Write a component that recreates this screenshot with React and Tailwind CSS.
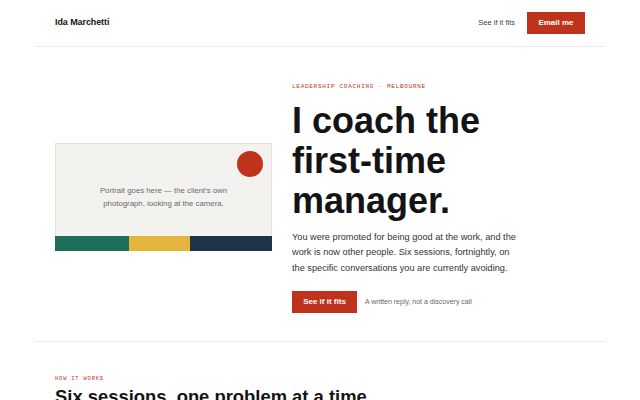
export default function App() {
  return (
    <div className="min-h-screen bg-white font-['Liberation_Sans',Arial,sans-serif] text-[#141414]">
      <div className="mx-[35px]">
        <header className="flex h-[47px] items-center justify-between border-b border-[#ebebeb] px-5">
          <div className="text-[9px] font-bold tracking-[-0.01em]">Ida Marchetti</div>
          <nav className="flex items-center gap-3">
            <a className="text-[7.5px] text-[#444]">See if it fits</a>
            <a className="flex h-[22px] w-[58px] items-center justify-center bg-[#bf331c] text-[8px] font-bold text-white">
              Email me
            </a>
          </nav>
        </header>

        <section className="flex items-center gap-5 border-b border-[#ebebeb] px-5 pt-[35px] pb-[28px]">
          <div className="w-[217px] shrink-0">
            <div className="relative flex h-[93px] items-center justify-center border border-b-0 border-[#e2e1dc] bg-[#f3f2ee] pt-[14px]">
              <p className="w-[146px] text-center text-[7.8px] leading-[13px] text-[#6a6a6a]">
                Portrait goes here — the client's own photograph, looking at the camera.
              </p>
              <span className="absolute top-[7px] right-[8px] h-[26px] w-[26px] rounded-full bg-[#bf331c]" />
            </div>
            <div className="flex h-[15px]">
              <div className="w-[74px] bg-[#1f6e5c]" />
              <div className="w-[61px] bg-[#e5b43d]" />
              <div className="flex-1 bg-[#1f344b]" />
            </div>
          </div>

          <div className="flex-1">
            <p className="font-['Liberation_Mono',monospace] text-[6px] leading-[9px] tracking-[0.12em] text-[#bf331c] uppercase">
              Leadership coaching · Melbourne
            </p>
            <h1 className="mt-[10px] text-[36px] leading-[40px] font-bold">
              I coach the
              <br />
              first-time
              <br />
              manager.
            </h1>
            <p className="mt-[9px] w-[226px] text-[9.2px] leading-[15.3px] text-[#333]">
              You were promoted for being good at the work, and the work is now other people. Six sessions, fortnightly, on the specific conversations you are currently avoiding.
            </p>
            <div className="mt-[15px] flex items-center gap-2">
              <a className="flex h-[22px] w-[65px] items-center justify-center bg-[#bf331c] text-[8px] font-bold text-white">
                See if it fits
              </a>
              <span className="text-[7px] text-[#666]">A written reply, not a discovery call</span>
            </div>
          </div>
        </section>

        <section className="px-5 pt-[33px]">
          <p className="font-['Liberation_Mono',monospace] text-[5.5px] leading-[8px] tracking-[0.14em] text-[#bf331c] uppercase">
            How it works
          </p>
          <h2 className="mt-[3px] text-[18.4px] leading-[22px] font-bold">
            Six sessions, one problem at a time.
          </h2>
        </section>
      </div>
    </div>
  );
}
